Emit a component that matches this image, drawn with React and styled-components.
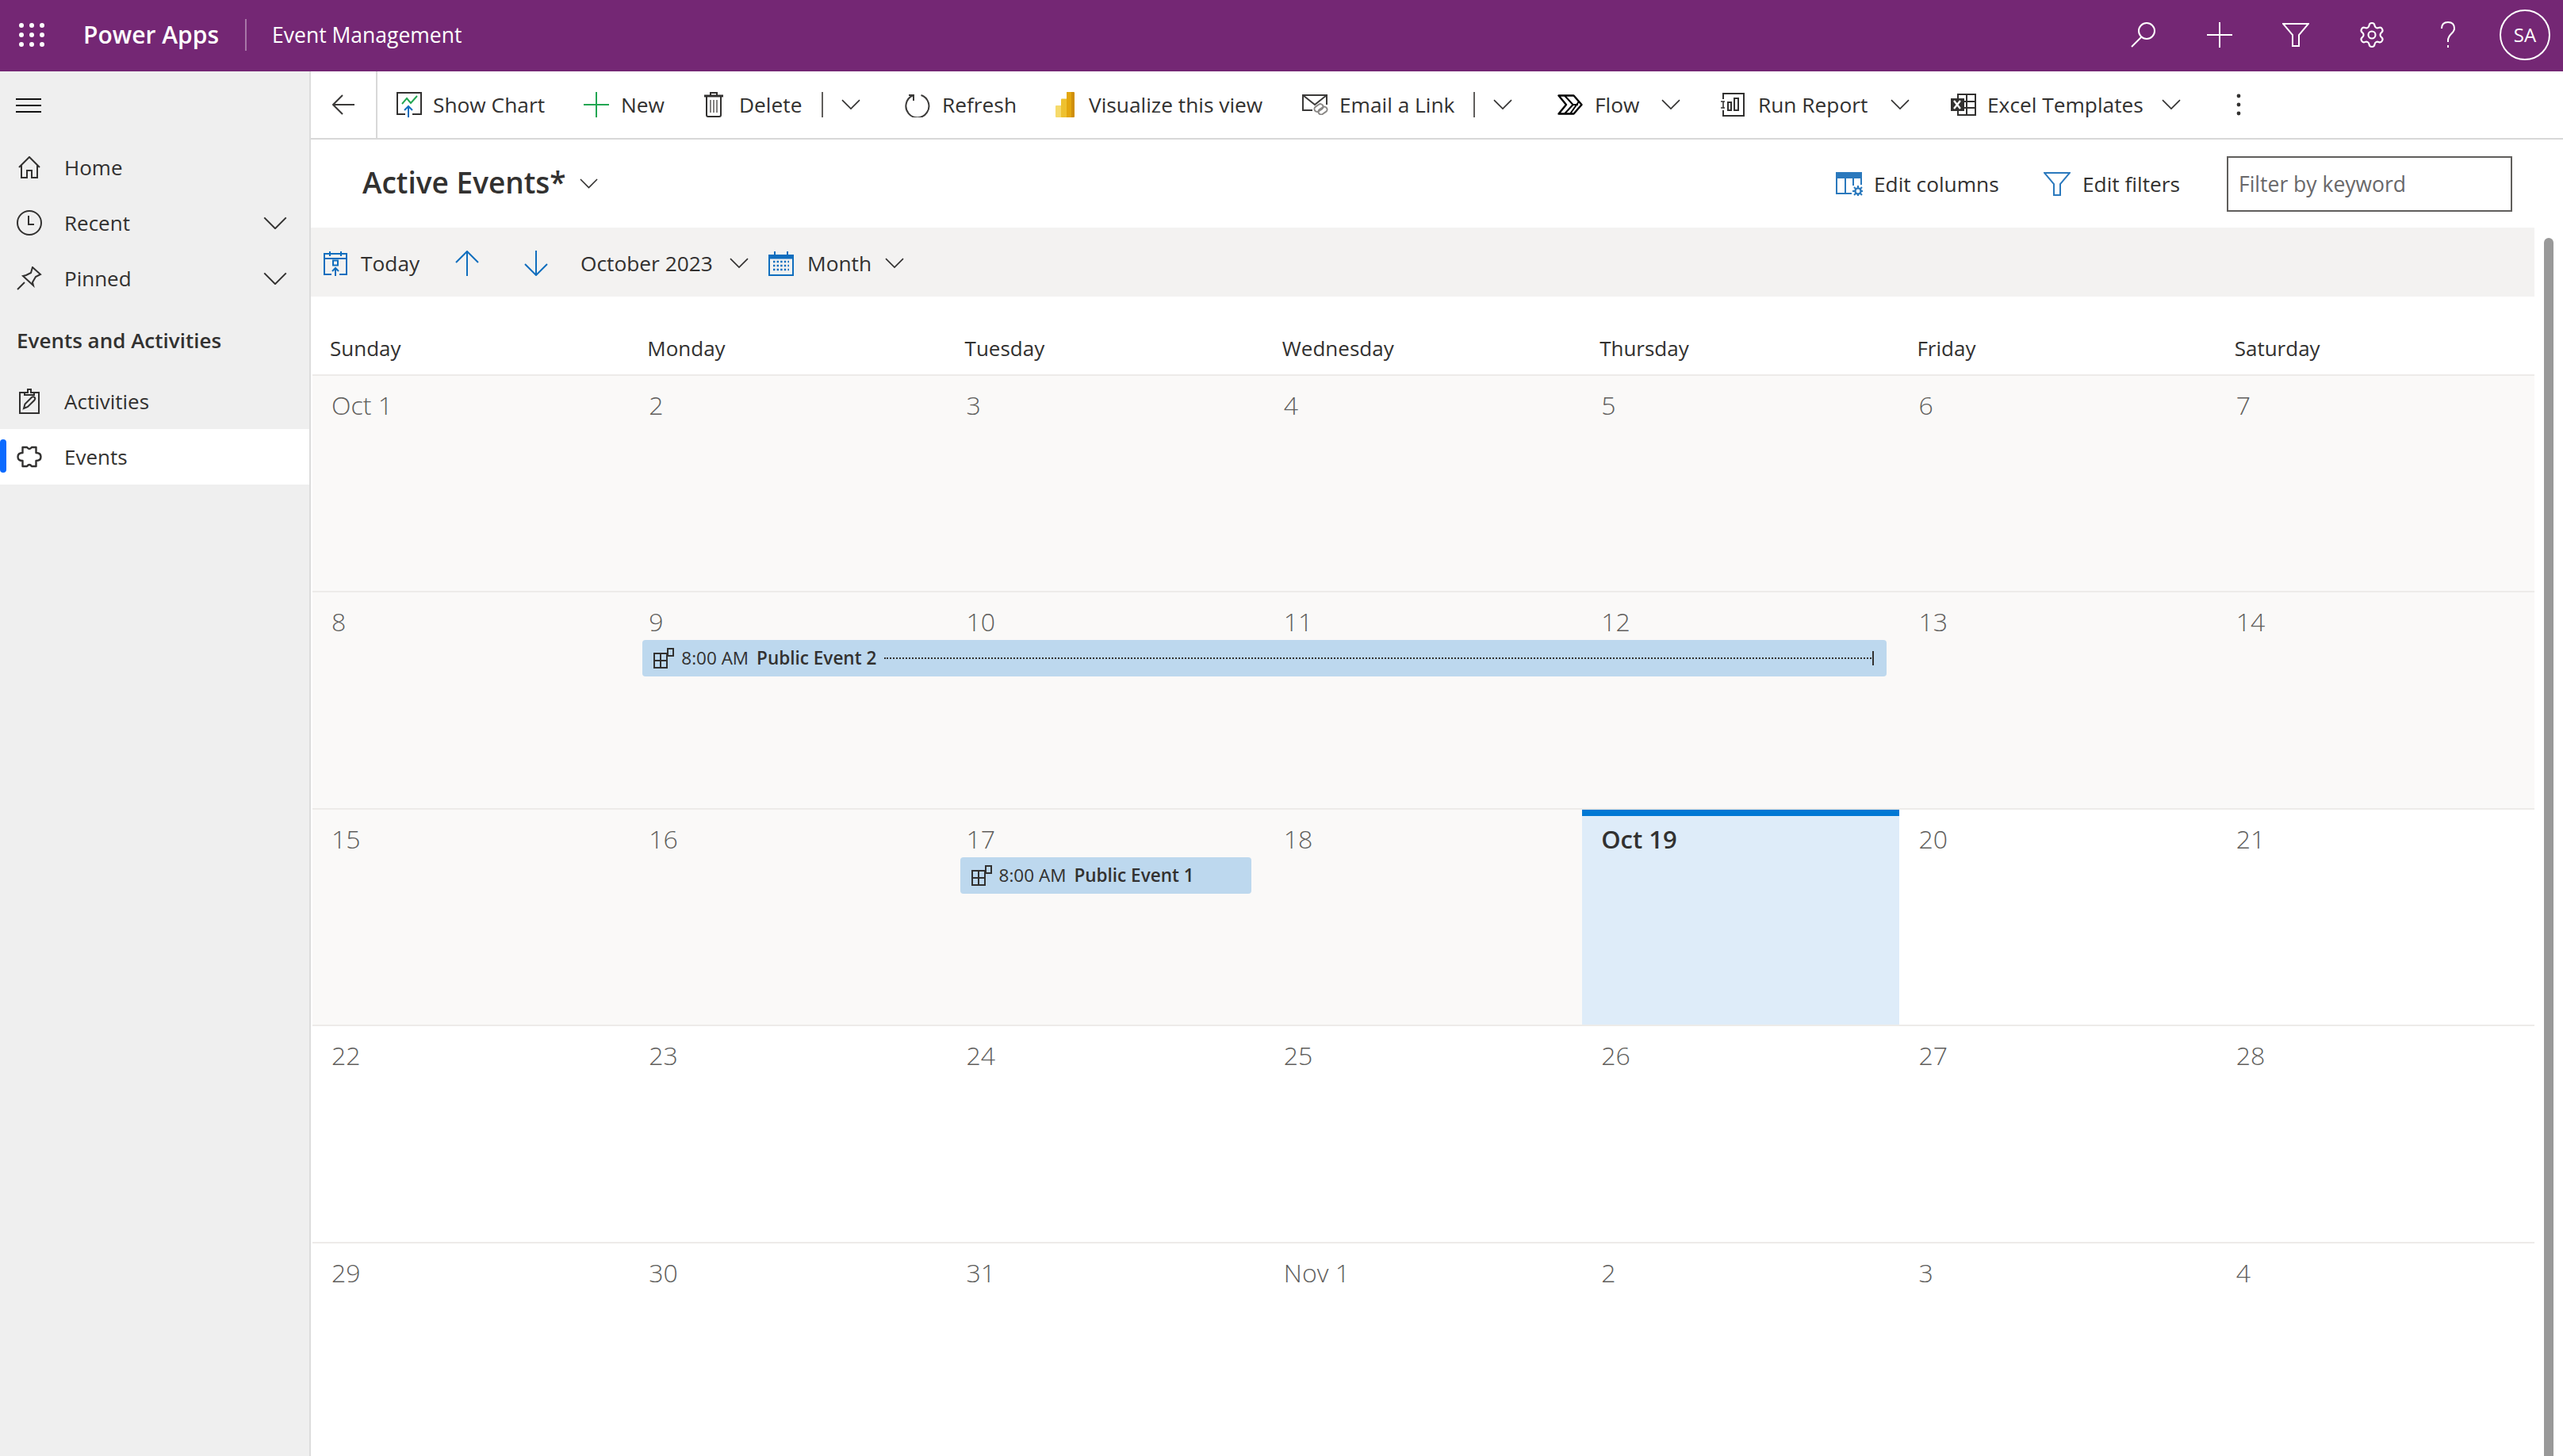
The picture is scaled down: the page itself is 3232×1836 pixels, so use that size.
import styled, { createGlobalStyle } from "styled-components";
import { Settings } from "lucide-react";

const INK = "#323130";
const BLUE = "#106ebe";

const GlobalStyle = createGlobalStyle`
  html, body {
    margin: 0;
    padding: 0;
    height: 100%;
    overflow: hidden;
    background: #fff;
  }
  #root {
    height: 100%;
  }
  * {
    box-sizing: border-box;
  }
`;

const Svg = styled.svg`
  display: block;
  flex: none;
  fill: none;
  stroke: ${(p) => p.$c || INK};
  stroke-width: ${(p) => p.$sw || 2};
`;

/* ---------- icons ---------- */

const Chevron = ({ w = 24, c }) => (
  <Svg $c={c} $sw={1.6} width={w} height={w * 0.55} viewBox="0 0 24 13">
    <path d="M1 1l11 11L23 1" />
  </Svg>
);

const WaffleDots = () => (
  <svg width="32" height="30" viewBox="0 0 32 30" fill="#fff">
    {[3, 16, 29].map((x) =>
      [3, 15, 27].map((y) => <circle key={`${x}-${y}`} cx={x} cy={y} r="3" />)
    )}
  </svg>
);

const SearchIcon = () => (
  <Svg $c="#fff" width="34" height="34" viewBox="0 0 34 34">
    <circle cx="21" cy="12" r="10" />
    <path d="M14 20L2 32" />
  </Svg>
);
const PlusIcon = ({ c = "#fff", size = 32 }) => (
  <Svg $c={c} width={size} height={size} viewBox="0 0 32 32">
    <path d="M16 0v32M0 16h32" />
  </Svg>
);
const FunnelIcon = ({ c = "#fff", sw = 2 }) => (
  <Svg $c={c} $sw={sw} width="34" height="30" viewBox="0 0 34 30">
    <path d="M1 1h32L21 15v14h-8V15z" />
  </Svg>
);
const HelpIcon = () => (
  <Svg $c="#fff" width="20" height="34" viewBox="0 0 20 34">
    <path d="M2 9c0-5 3-8 8-8s8 3 8 8c0 6-8 7-8 15v2" />
    <path d="M10 30v3" />
  </Svg>
);

const Hamburger = () => (
  <Svg $c="#111" width="32" height="20" viewBox="0 0 32 20">
    <path d="M0 2h32M0 10h32M0 18h32" />
  </Svg>
);
const HomeIcon = () => (
  <Svg width="28" height="28" viewBox="0 0 28 28">
    <path d="M1 14L14 1l13 13M4 11v16h7v-9h6v9h7V11" />
  </Svg>
);
const ClockIcon = () => (
  <Svg width="32" height="32" viewBox="0 0 32 32">
    <circle cx="16" cy="16" r="15" />
    <path d="M15 7v11h7" />
  </Svg>
);
const PinIcon = () => (
  <Svg width="32" height="30" viewBox="0 0 32 30">
    <path d="M1 29l9-9" />
    <path d="M20 1l10 9-6 3-4 7 1 4L8 12l4-1 6-3z" />
  </Svg>
);
const ClipboardIcon = () => (
  <Svg width="26" height="32" viewBox="0 0 26 32">
    <path d="M8 5H1v26h24V5h-7" />
    <path d="M7 8V5h4V1h4v4h4v3z" />
    <path d="M6 25l1.5-5.5L16 11q2-1.5 3.5 0t0 3.5L11 23z" />
  </Svg>
);
const PuzzleIcon = () => (
  <Svg $sw={2.4} width="32" height="28" viewBox="0 0 32 28" strokeLinejoin="round">
    <path d="M7.5 9V2H13q3 4 6 0h5.5v7q6 0 6 5t-6 5v7H19q-3-4-6 0H7.5v-7q-6 0-6-5t6-5z" />
  </Svg>
);

const ShowChartIcon = () => (
  <svg width="32" height="32" viewBox="0 0 32 32" fill="none" strokeWidth="2">
    <path d="M11 28H1V1h30v27H20" stroke={INK} />
    <path d="M7 15l6-7 5 6 8-9" stroke="#22a652" />
    <path d="M15 32V18M10 23l5-5 5 5" stroke={BLUE} />
  </svg>
);
const TrashIcon = () => (
  <Svg width="24" height="32" viewBox="0 0 24 32">
    <path d="M0 5h24" strokeWidth="3" />
    <path d="M8 4V1h8v3M3 6v23q0 2 2 2h14q2 0 2-2V6" />
    <path d="M8 10v16M12 10v16M16 10v16" strokeWidth="1.2" />
  </Svg>
);
const RefreshIcon = () => (
  <Svg $c="#3b3a39" width="32" height="32" viewBox="0 0 32 32">
    <path d="M10 4.5a14.5 14.5 0 1 0 10.5-.5" />
    <path d="M5 4h6v7" />
  </Svg>
);
const PowerBiIcon = () => (
  <svg width="24" height="32" viewBox="0 0 24 32">
    <rect x="0" y="17" width="9" height="15" rx="1" fill="#f6da6b" />
    <rect x="7" y="8.5" width="9" height="23.5" rx="1" fill="#eec12f" />
    <rect x="14" y="0" width="10" height="32" rx="1" fill="#cf8f0a" />
    <rect x="14" y="0" width="6" height="32" rx="1" fill="#e3a70f" />
  </svg>
);
const EmailLinkIcon = () => (
  <svg width="34" height="26" viewBox="0 0 34 26" fill="none" strokeWidth="2">
    <path d="M13 20H1V1h30v12M1 1l15 12L31 1" stroke="#3b3a39" />
    <rect x="15" y="13.5" width="12" height="7" rx="3.5" stroke="#8a8886" transform="rotate(-35 21 17)" />
    <rect x="20" y="17" width="12" height="7" rx="3.5" stroke="#8a8886" transform="rotate(-35 26 20.5)" />
  </svg>
);
const FlowIcon = () => (
  <svg width="32" height="26" viewBox="0 0 32 26" fill="none" stroke="#000" strokeLinejoin="round">
    <path d="M1.5 1.5h19L30.5 13l-10 11.5h-19L11 13z" strokeWidth="2.4" />
    <path d="M9 1.5L19.5 13 9 24.5M26 13H19.5M27 9L16 24.5" strokeWidth="2" />
  </svg>
);
const RunReportIcon = () => (
  <Svg width="30" height="30" viewBox="0 0 30 30">
    <path d="M3 8V1h26v28H3v-7" />
    <path d="M0 11h5M0 19h5M3 11v8" strokeWidth="1.6" />
    <rect x="9" y="12" width="4" height="10" />
    <rect x="17" y="7" width="5" height="15" />
  </Svg>
);
const ExcelIcon = () => (
  <svg width="32" height="28" viewBox="0 0 32 28" fill="none">
    <path d="M9 1h22v26H9zM20 1v26M9 10h22M9 18h22" stroke={INK} strokeWidth="2" />
    <rect x="0" y="6" width="17" height="16" fill={INK} />
    <path d="M4 9l8 10M12 9l-8 10" stroke="#fff" strokeWidth="2.4" />
  </svg>
);
const KebabIcon = () => (
  <svg width="6" height="28" viewBox="0 0 6 28" fill={INK}>
    <circle cx="3" cy="3" r="2.4" />
    <circle cx="3" cy="14" r="2.4" />
    <circle cx="3" cy="25" r="2.4" />
  </svg>
);
const BackIcon = () => (
  <Svg $c="#3b3a39" width="28" height="26" viewBox="0 0 28 26">
    <path d="M13 1L1 13l12 12M1 13h27" />
  </Svg>
);
const EditColumnsIcon = () => (
  <Svg $c="#2b79bd" width="34" height="30" viewBox="0 0 34 30">
    <path d="M1 1h31v6H1z" fill="#2b79bd" />
    <path d="M1 7v20h19M12 7v20M22 7v10M32 7v9" />
    <circle cx="28" cy="24" r="3.6" strokeWidth="2.4" />
    <path d="M28 17v3M28 28v2M21 24h3M32 24h2M23 19l2 2M31 27l2 2M33 19l-2 2M25 27l-2 2" />
  </Svg>
);
const TodayIcon = () => (
  <svg width="30" height="32" viewBox="0 0 30 32" fill="none" stroke={BLUE} strokeWidth="2">
    <path d="M10 30H1V4h28v26h-9M1 10h28M8 1v6M22 1v6" />
    <rect x="12" y="12.5" width="6" height="6" />
    <path d="M15 32V22M11 26l4-4 4 4" />
  </svg>
);
const MonthIcon = () => (
  <svg width="32" height="32" viewBox="0 0 32 32" fill="none" stroke={BLUE} strokeWidth="2">
    <path d="M1 6h30v25H1z" />
    <path d="M1 8h30" strokeWidth="5" />
    <path d="M8 1v4M24 1v4" />
    <path d="M6 14h20M6 19h20M6 24h20" strokeWidth="2.6" strokeDasharray="2.4 2.2" />
  </svg>
);
const ArrowIcon = ({ down }) => (
  <Svg $c={BLUE} width="30" height="32" viewBox="0 0 30 32" style={down ? { transform: "scaleY(-1)" } : undefined}>
    <path d="M15 32V1M1 15L15 1l14 14" />
  </Svg>
);
const EventIcon = () => (
  <Svg width="26" height="26" viewBox="0 0 26 26">
    <path d="M1 7h16v18H1zM1 16h16M9 7v18M18 1h7v9h-7z" />
  </Svg>
);

/* ---------- shell ---------- */

const Page = styled.div`
  display: flex;
  flex-direction: column;
  height: 100vh;
  font-family: "Open Sans", "Liberation Sans", sans-serif;
  color: ${INK};
  overflow: hidden;
`;

const TopBar = styled.header`
  flex: none;
  display: flex;
  align-items: center;
  height: 90px;
  padding: 0 16px 3px 24px;
  background: #742774;
  color: #fff;
`;

const BrandName = styled.span`
  margin-left: 49px;
  font-size: 30px;
  font-weight: 600;
`;

const BrandDivider = styled.span`
  width: 2px;
  height: 40px;
  margin: 0 32px 0 33px;
  background: #a877a8;
`;

const AppName = styled.span`
  font-size: 26.5px;
`;

const TopIcons = styled.div`
  display: flex;
  align-items: center;
  margin-left: auto;
`;

const TopIconSlot = styled.div`
  display: flex;
  justify-content: center;
  align-items: center;
  width: 96px;
`;

const Avatar = styled.div`
  display: flex;
  justify-content: center;
  align-items: center;
  width: 64px;
  height: 64px;
  margin-left: 17px;
  border: 2px solid #fff;
  border-radius: 50%;
  font-size: 24px;
`;

const Body = styled.div`
  flex: 1;
  display: flex;
  min-height: 0;
`;

/* ---------- sidebar ---------- */

const Sidebar = styled.nav`
  flex: none;
  width: 392px;
  background: #efefef;
  border-right: 2px solid #dcdcdc;
`;

const MenuRow = styled.div`
  display: flex;
  align-items: center;
  height: 86px;
  padding-left: 20px;
`;

const NavRow = styled.div`
  position: relative;
  display: flex;
  align-items: center;
  height: 70px;
  padding-left: 21px;
  font-size: 26px;
  background: ${(p) => (p.$active ? "#fff" : "transparent")};
  ${(p) =>
    p.$active &&
    `&::before {
      content: "";
      position: absolute;
      left: 0;
      top: 13px;
      width: 8px;
      height: 42px;
      border-radius: 4px;
      background: #0b6aff;
    }`}
`;

const NavIcon = styled.span`
  display: flex;
  justify-content: center;
  width: 32px;
  margin-right: 28px;
`;

const NavChevron = styled.span`
  margin-left: auto;
  margin-right: 28px;
`;

const NavGroup = styled.div`
  display: flex;
  align-items: center;
  height: 70px;
  margin-top: 8px;
  margin-bottom: 7px;
  padding-left: 21px;
  font-size: 26px;
  font-weight: 600;
`;

/* ---------- command bar ---------- */

const Main = styled.main`
  flex: 1;
  min-width: 0;
  display: flex;
  flex-direction: column;
`;

const CommandBar = styled.div`
  flex: none;
  display: flex;
  align-items: center;
  height: 86px;
  border-bottom: 2px solid #d8d8d8;
`;

const BackSlot = styled.div`
  flex: none;
  display: flex;
  align-items: center;
  justify-content: center;
  align-self: stretch;
  width: 84px;
  margin-right: 24px;
  border-right: 2px solid #d8d8d8;
`;

const Command = styled.div`
  flex: none;
  display: flex;
  align-items: center;
  gap: ${(p) => p.$gap}px;
  width: ${(p) => p.$w}px;
  font-size: 26.3px;
  white-space: nowrap;
`;

const CommandSep = styled.span`
  flex: none;
  width: 2px;
  height: 32px;
  margin-right: ${(p) => p.$mr}px;
  background: #605e5c;
`;

const TitleRow = styled.div`
  flex: none;
  display: flex;
  align-items: center;
  height: 111px;
  padding: 0 64px 0 65px;
`;

const ViewTitle = styled.h1`
  margin: 0 17px 4px 0;
  font-size: 37px;
  font-weight: 600;
  white-space: nowrap;
`;

const TitleTools = styled.div`
  display: flex;
  align-items: center;
  margin-left: auto;
`;

const KeywordInput = styled.input`
  width: 360px;
  height: 70px;
  padding: 0 13px;
  border: 2px solid #605e5c;
  border-radius: 0;
  outline: none;
  font-family: inherit;
  font-size: 26.5px;
  &::placeholder {
    color: #69686a;
    opacity: 1;
  }
`;

/* ---------- calendar ---------- */

const CalendarArea = styled.div`
  flex: 1;
  min-height: 0;
  display: flex;
`;

const Calendar = styled.section`
  flex: 1;
  min-width: 0;
  display: flex;
  flex-direction: column;
`;

const CalendarToolbar = styled.div`
  flex: none;
  display: flex;
  align-items: center;
  height: 87px;
  padding: 3px 0 0 16px;
  background: #f3f2f1;
`;

const Weekdays = styled.div`
  flex: none;
  display: grid;
  grid-template-columns: repeat(7, 1fr);
  align-items: center;
  height: 98px;
  margin-left: 2px;
  padding-top: 32px;
`;

const Weekday = styled.div`
  padding-left: 22px;
  font-size: 26px;
  font-weight: 500;
`;

const Weeks = styled.div`
  flex: 1;
  min-height: 0;
  margin-left: 2px;
  overflow: hidden;
`;

const Week = styled.div`
  display: grid;
  grid-template-columns: repeat(7, 1fr);
  height: 273.4px;
  border-top: 2px solid #edebe9;
`;

const Day = styled.div`
  position: relative;
  padding: ${(p) => (p.$today ? 8 : 16)}px 0 0 24px;
  border-top: ${(p) => (p.$today ? "8px solid #0078d4" : "none")};
  background: ${(p) => (p.$today ? "#deecf9" : p.$past ? "#faf9f8" : "#fff")};
  color: ${(p) => (p.$today ? INK : "#605e5c")};
  font-size: ${(p) => (p.$today ? 31 : 32)}px;
  font-weight: ${(p) => (p.$today ? 600 : 300)};
  line-height: 42px;
`;

const EventBar = styled.div`
  position: absolute;
  z-index: 1;
  top: 60px;
  left: ${(p) => p.$left}px;
  display: flex;
  align-items: center;
  width: ${(p) => p.$w}px;
  height: 46px;
  padding-left: 14px;
  border-radius: 4px;
  background: #bdd8ee;
  color: ${INK};
  font-size: 22.5px;
  font-weight: 400;
  line-height: 1;
  white-space: nowrap;
`;

const EventTime = styled.span`
  margin: 0 10px 0 9px;
`;

const EventName = styled.span`
  font-weight: 600;
`;

const EventSpan = styled.span`
  position: relative;
  flex: 1;
  height: 0;
  margin: 0 16px 0 10px;
  border-top: 2px dotted ${INK};
  &::after {
    content: "";
    position: absolute;
    right: 0;
    top: -10px;
    width: 2px;
    height: 18px;
    background: ${INK};
  }
`;

const ScrollTrack = styled.div`
  flex: none;
  width: 36px;
  padding: 13px 12px 0;
`;

const ScrollThumb = styled.div`
  height: 100%;
  border-radius: 6px 6px 0 0;
  background: #999;
`;

/* ---------- data ---------- */

const commandsA = [
  { label: "Show Chart", icon: <ShowChartIcon />, w: 236, gap: 14 },
  { label: "New", icon: <PlusIcon c="#22a652" />, w: 152, gap: 15 },
  { label: "Delete", icon: <TrashIcon />, w: 148, gap: 20 },
];

const weeks = [
  ["Oct 1", "2", "3", "4", "5", "6", "7"],
  ["8", "9", "10", "11", "12", "13", "14"],
  ["15", "16", "17", "18", "Oct 19", "20", "21"],
  ["22", "23", "24", "25", "26", "27", "28"],
  ["29", "30", "31", "Nov 1", "2", "3", "4"],
];

const dayNames = ["Sunday", "Monday", "Tuesday", "Wednesday", "Thursday", "Friday", "Saturday"];

const CalendarEvent = ({ name, w, long }) => (
  <EventBar $left={16} $w={w}>
    <EventIcon />
    <EventTime>8:00 AM</EventTime>
    <EventName>{name}</EventName>
    {long && <EventSpan />}
  </EventBar>
);

const App = () => {
  return (
    <Page>
      <GlobalStyle />
      <TopBar>
        <WaffleDots />
        <BrandName>Power Apps</BrandName>
        <BrandDivider />
        <AppName>Event Management</AppName>
        <TopIcons>
          <TopIconSlot><SearchIcon /></TopIconSlot>
          <TopIconSlot><PlusIcon /></TopIconSlot>
          <TopIconSlot><FunnelIcon /></TopIconSlot>
          <TopIconSlot><Settings size={36} color="#fff" strokeWidth={1.4} /></TopIconSlot>
          <TopIconSlot><HelpIcon /></TopIconSlot>
          <Avatar>SA</Avatar>
        </TopIcons>
      </TopBar>

      <Body>
        {/* left nav */}
        <Sidebar>
          <MenuRow><Hamburger /></MenuRow>
          <NavRow>
            <NavIcon><HomeIcon /></NavIcon>Home
          </NavRow>
          <NavRow>
            <NavIcon><ClockIcon /></NavIcon>Recent
            <NavChevron><Chevron w={30} /></NavChevron>
          </NavRow>
          <NavRow>
            <NavIcon><PinIcon /></NavIcon>Pinned
            <NavChevron><Chevron w={30} /></NavChevron>
          </NavRow>
          <NavGroup>Events and Activities</NavGroup>
          <NavRow>
            <NavIcon><ClipboardIcon /></NavIcon>Activities
          </NavRow>
          <NavRow $active>
            <NavIcon><PuzzleIcon /></NavIcon>Events
          </NavRow>
        </Sidebar>

        <Main>
          <CommandBar>
            <BackSlot><BackIcon /></BackSlot>
            {commandsA.map(({ label, icon, w, gap }) => (
              <Command key={label} $w={w} $gap={gap}>
                {icon}
                {label}
              </Command>
            ))}
            <CommandSep $mr={23} />
            <Command $w={80} $gap={0}><Chevron /></Command>
            <Command $w={190} $gap={15}><RefreshIcon />Refresh</Command>
            <Command $w={311} $gap={18}><PowerBiIcon />Visualize this view</Command>
            <Command $w={216} $gap={13}><EmailLinkIcon />Email a Link</Command>
            <CommandSep $mr={23} />
            <Command $w={81} $gap={0}><Chevron /></Command>
            <Command $w={131} $gap={15}><FlowIcon />Flow</Command>
            <Command $w={75} $gap={0}><Chevron /></Command>
            <Command $w={214} $gap={17}><RunReportIcon />Run Report</Command>
            <Command $w={76} $gap={0}><Chevron /></Command>
            <Command $w={266} $gap={14}><ExcelIcon />Excel Templates</Command>
            <Command $w={94} $gap={0}><Chevron /></Command>
            <KebabIcon />
          </CommandBar>

          <TitleRow>
            <ViewTitle>Active Events*</ViewTitle>
            <Chevron w={23} />
            <TitleTools>
              <Command $w={262} $gap={14}><EditColumnsIcon />Edit columns</Command>
              <Command $w={231} $gap={15}><FunnelIcon c="#2b79bd" />Edit filters</Command>
              <KeywordInput placeholder="Filter by keyword" />
            </TitleTools>
          </TitleRow>

          <CalendarArea>
            <Calendar>
              <CalendarToolbar>
                <Command $w={166} $gap={17}><TodayIcon />Today</Command>
                <Command $w={87} $gap={0}><ArrowIcon /></Command>
                <Command $w={71} $gap={0}><ArrowIcon down /></Command>
                <Command $w={188} $gap={0}>October 2023</Command>
                <Command $w={49} $gap={0}><Chevron /></Command>
                <Command $w={147} $gap={17}><MonthIcon />Month</Command>
                <Command $w={24} $gap={0}><Chevron /></Command>
              </CalendarToolbar>

              <Weekdays>
                {dayNames.map((d) => (
                  <Weekday key={d}>{d}</Weekday>
                ))}
              </Weekdays>

              <Weeks>
                {weeks.map((week, wi) => (
                  <Week key={wi}>
                    {week.map((label, di) => {
                      const today = label === "Oct 19";
                      const past = wi < 2 || (wi === 2 && di < 4);
                      return (
                        <Day key={label} $today={today} $past={past}>
                          {label}
                          {label === "9" && <CalendarEvent name="Public Event 2" w={1569} long />}
                          {label === "17" && <CalendarEvent name="Public Event 1" w={367} />}
                        </Day>
                      );
                    })}
                  </Week>
                ))}
              </Weeks>
            </Calendar>
            <ScrollTrack><ScrollThumb /></ScrollTrack>
          </CalendarArea>
        </Main>
      </Body>
    </Page>
  );
};

export default App;
